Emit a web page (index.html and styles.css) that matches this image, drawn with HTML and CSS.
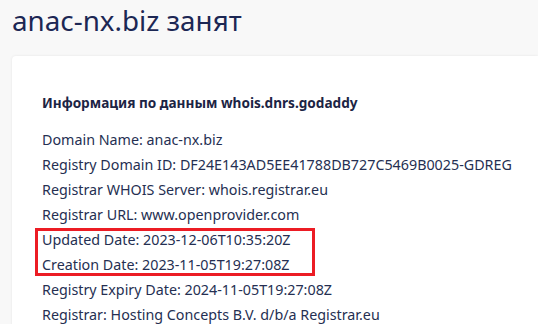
FILE: index.html
```html
<!DOCTYPE html>
<html lang="ru">
<head>
    <meta charset="UTF-8">
    <meta name="viewport" content="width=device-width, initial-scale=1.0">
    <title>anac-nx.biz занят</title>
    <link rel="stylesheet" href="styles.css">
</head>
<body>
    <h1 class="page-title">anac-nx.biz занят</h1>

    <div class="card">
        <h3 class="card-title">Информация по данным whois.dnrs.godaddy</h3>
        <div class="whois">
            <div class="row">Domain Name: anac-nx.biz</div>
            <div class="row">Registry Domain ID: DF24E143AD5EE41788DB727C5469B0025-GDREG</div>
            <div class="row">Registrar WHOIS Server: whois.registrar.eu</div>
            <div class="row">Registrar URL: www.openprovider.com</div>
            <div class="highlight">
                <div class="row">Updated Date: 2023-12-06T10:35:20Z</div>
                <div class="row">Creation Date: 2023-11-05T19:27:08Z</div>
            </div>
            <div class="row">Registry Expiry Date: 2024-11-05T19:27:08Z</div>
            <div class="row">Registrar: Hosting Concepts B.V. d/b/a Registrar.eu</div>
        </div>
    </div>
</body>
</html>
```

FILE: styles.css
```css
body {
    font-family: 'Noto Sans', 'Open Sans', sans-serif;
    background-color: #f8f8f8;
    color: #252f52;
    margin: 0;
    padding: 0;
    height: 100vh;
    overflow: hidden;
}

.page-title {
    margin: 0;
    padding: 0 12px;
    font-size: 27.8px;
    font-weight: 400;
    line-height: 40px;
    color: #1c2754;
}

.card {
    margin: 16px 0 0 12px;
    padding: 37px 0 0 30px;
    background: #fff;
    border-radius: 4px 0 0 0;
    box-shadow: 0 0 3px rgba(0, 0, 0, 0.08);
}

.card-title {
    margin: 0 0 14px;
    font-size: 13.6px;
    font-weight: 700;
    line-height: 20px;
    color: #1c2444;
}

.row {
    font-size: 14.3px;
    line-height: 25px;
    white-space: nowrap;
}

.highlight {
    width: fit-content;
    margin-left: -8px;
    padding: 0 25px 0 8px;
    outline: 3px solid #ec1c24;
    outline-offset: -4px;
}
```
